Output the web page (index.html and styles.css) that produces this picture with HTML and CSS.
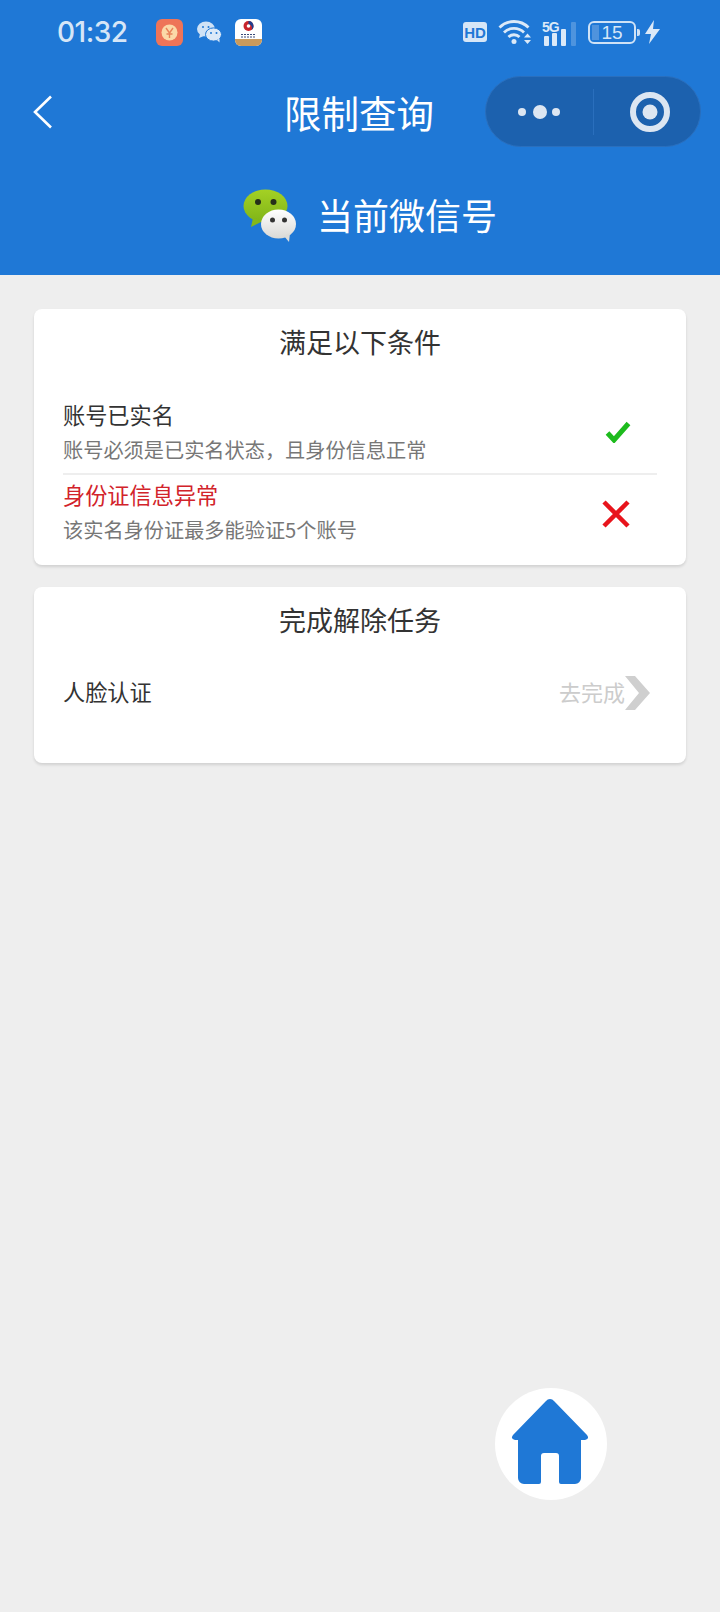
FILE: index.html
```html
<!DOCTYPE html>
<html lang="zh-CN">
<head>
  <meta charset="UTF-8">
  <title>限制查询</title>
  <link rel="stylesheet" href="styles.css">
</head>
<body>

  <header class="header">
    <div class="status-bar">
      <span class="time">01:32</span>
      <div class="notify-icons">
        <svg class="tile" width="27" height="27" viewBox="0 0 27 27">
          <rect width="27" height="27" rx="6" fill="#ee7458"/>
          <circle cx="13.5" cy="13.5" r="8" fill="#fbd9a8"/>
          <path d="M10 9l3.5 5 3.5-5M13.5 14v5M10.5 15h6" fill="none" stroke="#e8825a" stroke-width="1.4"/>
        </svg>
        <svg class="wechat-small" width="26" height="22" viewBox="0 0 26 22">
          <ellipse cx="10" cy="8" rx="9" ry="7.5" fill="#cfe2f6"/>
          <path d="M4 13l-1 4 5-2z" fill="#cfe2f6"/>
          <ellipse cx="17.5" cy="13.5" rx="8" ry="6.6" fill="#dbe9f8" stroke="#1f78d6"/>
          <path d="M21 19l2.500 2.500 0-4z" fill="#dbe9f8"/>
          <circle cx="7" cy="6" r="1" fill="#1f78d6"/>
          <circle cx="12.500" cy="6" r="1" fill="#1f78d6"/>
          <circle cx="15" cy="12" r="1" fill="#1f78d6"/>
          <circle cx="20.500" cy="12" r="1" fill="#1f78d6"/>
        </svg>
        <svg class="tile" width="27" height="27" viewBox="0 0 27 27">
          <rect width="27" height="27" rx="6" fill="#fff"/>
          <path d="M0 20h27v1a6 6 0 0 1-6 6H6a6 6 0 0 1-6-6z" fill="#c99a5c"/>
          <circle cx="13.500" cy="7" r="5" fill="#c8242c"/>
          <path d="M13.500 2a5 5 0 0 1 3 9 4 4 0 0 0-3-6z" fill="#1f3f8f"/>
          <circle cx="13.500" cy="7" r="1.800" fill="#fff"/>
          <path d="M6 15.500h15M6 18h15" stroke="#3a4a78" stroke-width="1.200" stroke-dasharray="2 1"/>
        </svg>
      </div>
      <div class="system-icons">
        <svg class="hd" width="24" height="20" viewBox="0 0 24 20">
          <rect width="24" height="20" rx="3" fill="#d6e6f7"/>
          <text x="12" y="15.500" text-anchor="middle" class="hd-text">HD</text>
        </svg>
        <svg class="wifi" width="34" height="26" viewBox="0 0 34 26">
          <path d="M1.500 8.500c8-8 21-8 29 0M6 13.500c5.500-5.500 14.500-5.500 20 0M10.500 18c3-3 8-3 11 0" fill="none" stroke="#dbe9f8" stroke-width="2.800"/>
          <circle cx="16" cy="22.500" r="2.500" fill="#dbe9f8"/>
          <path d="M26 18.500l3.500-4 3.500 4zM26 21l3.500 4 3.500-4z" fill="#dbe9f8"/>
        </svg>
        <div class="signal">
          <span class="five-g">5G</span>
          <svg width="34" height="30" viewBox="0 0 34 30">
            <rect x="2" y="19" width="5" height="10" rx="1" fill="#dbe9f8"/>
            <rect x="10" y="16" width="5" height="13" rx="1" fill="#dbe9f8"/>
            <rect x="19" y="12" width="5" height="17" rx="1" fill="#dbe9f8"/>
            <rect x="29" y="5" width="5" height="24" rx="1" fill="#dbe9f8" opacity="0.25"/>
          </svg>
        </div>
        <div class="battery">
          <span class="battery-level"></span>
          <span class="battery-num">15</span>
        </div>
        <svg class="bolt" width="15" height="24" viewBox="0 0 15 24">
          <path d="M9 0L0 14h6l-2 10 11-15H8z" fill="#dbe9f8"/>
        </svg>
      </div>
    </div>

    <div class="nav-bar">
      <svg class="back" width="20" height="34" viewBox="0 0 20 34">
        <path d="M18 1.500L2 17l16 15.500" fill="none" stroke="#fff" stroke-width="2.600"/>
      </svg>
      <h1 class="nav-title">限制查询</h1>
      <div class="capsule">
        <svg width="52" height="16" viewBox="0 0 52 16">
          <circle cx="4" cy="8" r="4" fill="#dce6f2"/>
          <circle cx="22" cy="8" r="7" fill="#dce6f2"/>
          <circle cx="38" cy="8" r="4" fill="#dce6f2"/>
        </svg>
        <span class="capsule-line"></span>
        <svg width="40" height="40" viewBox="0 0 40 40">
          <circle cx="20" cy="20" r="17" fill="none" stroke="#dce6f2" stroke-width="6"/>
          <circle cx="20" cy="20" r="7.500" fill="#dce6f2"/>
        </svg>
      </div>
    </div>

    <div class="account">
      <svg class="wechat-big" width="54" height="54" viewBox="0 0 54 54">
        <defs>
          <linearGradient id="greenFill" x1="0" y1="0" x2="0" y2="1">
            <stop offset="0" stop-color="#a4d124"/>
            <stop offset="1" stop-color="#7fb418"/>
          </linearGradient>
          <linearGradient id="whiteFill" x1="0" y1="0" x2="0" y2="1">
            <stop offset="0" stop-color="#ffffff"/>
            <stop offset="1" stop-color="#d9d9d6"/>
          </linearGradient>
        </defs>
        <ellipse cx="22.500" cy="17" rx="22" ry="16.500" fill="url(#greenFill)"/>
        <path d="M10 29l-2 9 12-6z" fill="#84b81a"/>
        <circle cx="15" cy="13" r="3" fill="#26301a"/>
        <circle cx="30.500" cy="13" r="3" fill="#26301a"/>
        <ellipse cx="35.500" cy="35" rx="17.500" ry="14.500" fill="url(#whiteFill)"/>
        <path d="M41 47l5 6 1-9z" fill="#dcdcd9"/>
        <circle cx="29.500" cy="31" r="2.500" fill="#333"/>
        <circle cx="41.500" cy="31" r="2.500" fill="#333"/>
      </svg>
      <span class="account-name">当前微信号</span>
    </div>
  </header>

  <main class="content">
    <section class="card">
      <h2 class="card-title">满足以下条件</h2>
      <div class="cond first">
        <div class="cond-text">
          <p class="cond-name">账号已实名</p>
          <p class="cond-desc">账号必须是已实名状态，且身份信息正常</p>
        </div>
        <svg class="cond-icon" width="26" height="22" viewBox="0 0 26 22">
          <path d="M2.500 12L9 19 23.500 2.500" fill="none" stroke="#1dbb1d" stroke-width="5"/>
        </svg>
      </div>
      <div class="cond last">
        <div class="cond-text">
          <p class="cond-name error">身份证信息异常</p>
          <p class="cond-desc">该实名身份证最多能验证5个账号</p>
        </div>
        <svg class="cond-icon cross" width="28" height="28" viewBox="0 0 28 28">
          <path d="M2 2l24 24M26 2L2 26" fill="none" stroke="#e8141c" stroke-width="4.500"/>
        </svg>
      </div>
    </section>

    <section class="card task-card">
      <h2 class="card-title">完成解除任务</h2>
      <div class="task">
        <span class="cond-name">人脸认证</span>
        <a class="task-link">去完成
          <svg width="25" height="34" viewBox="0 0 25 34">
            <path d="M0 0h10l15 17-15 17H0l14-17z" fill="#cfcfcf"/>
          </svg>
        </a>
      </div>
    </section>
  </main>

  <div class="home-btn">
    <svg width="78" height="86" viewBox="0 0 78 86">
      <path d="M35 2a5 5 0 0 1 8 0l33 34q3 4-2 5h-4v38a6 6 0 0 1-6 6H50a2 2 0 0 1-2-2V57a3 3 0 0 0-3-3H33a3 3 0 0 0-3 3v26a2 2 0 0 1-2 2H13a6 6 0 0 1-6-6V41H4q-5-1-2-5z" fill="#1f78d6"/>
    </svg>
  </div>

</body>
</html>
```

FILE: styles.css
```css
* {
  box-sizing: border-box;
  margin: 0;
  padding: 0;
}
html, body {
  height: 100%;
  font-family: "Noto Sans CJK SC", "Noto Sans", sans-serif;
  background-color: #eeeeee;
}
body {
  position: relative;
  overflow: hidden;
}
.header {
  height: 275px;
  background-color: #1f78d6;
  color: white;
}
.status-bar {
  height: 64px;
  display: flex;
  align-items: center;
  padding: 0 60px 0 57px;
}
.time {
  width: 99px;
  font-family: Inter, "Liberation Sans", sans-serif;
  font-size: 28px;
  font-weight: 500;
  letter-spacing: -0.5px;
  color: #d6e6f7;
}
.notify-icons {
  display: flex;
  align-items: center;
}
.wechat-small {
  margin: 0 13px;
}
.system-icons {
  margin-left: auto;
  display: flex;
  align-items: center;
}
.hd-text {
  font-family: "Liberation Sans", sans-serif;
  font-size: 15px;
  font-weight: bold;
  fill: #1f78d6;
}
.wifi {
  margin-left: 11px;
}
.signal {
  position: relative;
  width: 34px;
  height: 30px;
  margin-left: 10px;
}
.five-g {
  position: absolute;
  left: 0;
  top: 3px;
  font-family: "Liberation Sans", sans-serif;
  font-size: 14px;
  font-weight: bold;
  letter-spacing: -1px;
  line-height: 14px;
  color: #dbe9f8;
}
.battery {
  position: relative;
  width: 48px;
  height: 23px;
  margin-left: 12px;
  border: 2px solid #cfe2f6;
  border-radius: 6px;
  text-align: center;
}
.battery::after {
  content: "";
  position: absolute;
  right: -6px;
  top: 6px;
  width: 3px;
  height: 7px;
  background-color: #cfe2f6;
  border-radius: 0 2px 2px 0;
}
.battery-level {
  position: absolute;
  left: 2px;
  top: 2px;
  bottom: 2px;
  width: 7px;
  background-color: #4f93dd;
}
.battery-num {
  position: relative;
  font-family: "Liberation Sans", sans-serif;
  font-size: 19px;
  line-height: 19px;
  display: block;
  color: #d6e6f7;
}
.bolt {
  margin-left: 9px;
}
.nav-bar {
  position: relative;
  height: 96px;
  display: flex;
  align-items: center;
  justify-content: center;
}
.back {
  position: absolute;
  left: 33px;
  top: 31px;
}
.nav-title {
  font-size: 37.5px;
  font-weight: 400;
  line-height: 96px;
  margin-right: 2px;
}
.capsule {
  position: absolute;
  left: 485px;
  top: 12px;
  width: 216px;
  height: 71px;
  display: flex;
  align-items: center;
  padding-left: 32px;
  background-color: #1c61ae;
  border-radius: 36px;
  border: 1px solid #2a6fbd;
}
.capsule-line {
  width: 1px;
  height: 46px;
  margin: 0 36px 0 23px;
  background-color: #2a6fbd;
}
.account {
  display: flex;
  align-items: center;
  justify-content: center;
  height: 84px;
  margin-top: 14px;
  padding-left: 20px;
}
.wechat-big {
  margin-right: 20px;
}
.account-name {
  margin-top: -4px;
  font-size: 36px;
}
.content {
  padding: 34px 34px 0;
}
.card {
  background-color: white;
  border-radius: 8px;
  box-shadow: 0 2px 3px rgba(0, 0, 0, 0.12);
  padding: 0 29px;
}
.card-title {
  font-size: 27px;
  font-weight: 400;
  line-height: 66px;
  text-align: center;
  color: #333;
}
.cond {
  display: flex;
  align-items: center;
  justify-content: space-between;
}
.cond.first {
  height: 100px;
  padding-top: 16px;
  border-bottom: 2px solid #eeeeee;
}
.cond.last {
  height: 90px;
  padding-bottom: 17px;
}
.cond-name {
  font-size: 22.2px;
  line-height: 30px;
  color: #333;
}
.cond-name.error {
  color: #d2232a;
}
.cond-desc {
  margin-top: 6px;
  font-size: 20.2px;
  line-height: 30px;
  color: #777;
}
.cond-icon {
  margin-right: 26px;
}
.cond-icon.cross {
  margin: 5px 27px 0 0;
}
.task-card {
  height: 176px;
  margin-top: 22px;
}
.task {
  display: flex;
  align-items: center;
  justify-content: space-between;
  height: 34px;
  margin-top: 21px;
  padding-right: 7px;
}
.task-link {
  display: flex;
  align-items: center;
  font-size: 22px;
  color: #ccc;
}
.task-link svg {
  margin-top: 4px;
}
.home-btn {
  position: absolute;
  left: 495px;
  top: 1388px;
  width: 112px;
  height: 112px;
  padding: 11px 0 0 16px;
  background-color: white;
  border-radius: 50%;
}
```
